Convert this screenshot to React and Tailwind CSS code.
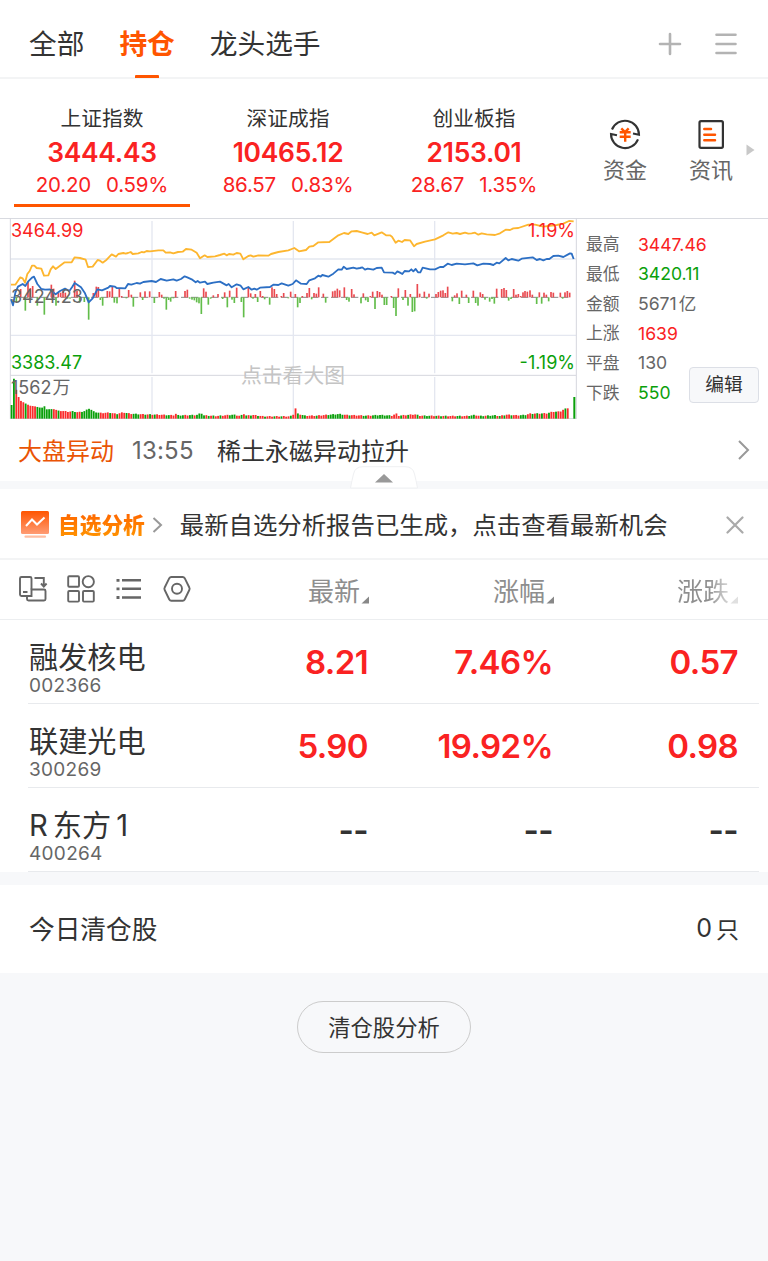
const tabs = ["全部", "持仓", "龙头选手"];

const indices = [
    { name: "上证指数", value: "3444.43", change: "20.20", percent: "0.59%" },
    { name: "深证成指", value: "10465.12", change: "86.57", percent: "0.83%" },
    { name: "创业板指", value: "2153.01", change: "28.67", percent: "1.35%" },
];

const stats = [
    { label: "最高", value: "3447.46", color: "text-[#fa2222]" },
    { label: "最低", value: "3420.11", color: "text-[#0aa00a]" },
    { label: "金额", value: "5671", unit: "亿", color: "text-[#666]" },
    { label: "上涨", value: "1639", color: "text-[#fa2222]" },
    { label: "平盘", value: "130", color: "text-[#666]" },
    { label: "下跌", value: "550", color: "text-[#0aa00a]" },
];

const stocks = [
    { name: "融发核电", code: "002366", cells: ["8.21", "7.46%", "0.57"] },
    { name: "联建光电", code: "300269", cells: ["5.90", "19.92%", "0.98"] },
    { name: "R东方1", code: "400264", cells: ["--", "--", "--"] },
];

// Chart series use a viewBox three times as fine as the drawn size
const leadLine =
    "33,224 46,224 61,202 68,205 75,218 82,192 89,183 96,167 103,167 110,174 124,176 132,197 145,196 152,178 159,169 167,177 194,157 215,157 224,142 240,144 257,149 264,171 278,170 293,150 300,152 308,158 320,149 335,133 348,140 355,132 370,129 377,131 384,129 392,126 398,132 415,130 425,126 432,127 440,123 450,124 475,121 490,121 497,128 510,127 520,130 534,126 548,125 558,117 575,119 590,128 600,145 614,136 622,141 645,139 660,135 673,131 680,136 687,132 700,134 710,129 721,131 730,148 745,138 752,136 760,140 775,136 805,137 813,132 835,126 865,121 883,114 897,124 918,120 928,110 940,108 955,97 988,96 1015,76 1032,69 1045,72 1055,64 1070,63 1085,67 1103,72 1115,68 1123,76 1145,67 1158,76 1170,76 1176,80 1187,98 1195,92 1206,96 1214,90 1230,91 1242,109 1250,102 1275,95 1305,88 1330,76 1345,67 1358,71 1370,69 1380,72 1395,68 1405,71 1415,70 1425,68 1435,74 1445,70 1460,73 1485,75 1500,70 1517,59 1530,60 1540,55 1555,54 1585,44 1605,44 1630,50 1670,45 1690,41 1707,33 1721,34";

const indexLine =
    "33,268 39,286 46,248 54,230 68,222 76,228 84,215 96,203 102,200 112,222 124,237 135,239 150,238 160,247 167,253 180,243 195,236 208,243 216,232 224,219 243,232 255,250 266,277 278,265 292,238 306,241 325,233 330,228 345,230 350,234 376,235 384,222 394,224 410,219 420,221 430,216 455,213 468,216 482,207 500,212 520,208 530,212 543,207 554,199 562,202 575,208 587,217 593,213 600,218 615,215 622,222 640,218 660,215 680,226 686,222 695,232 710,223 722,227 730,238 745,231 755,239 763,236 770,239 780,233 810,231 820,224 835,225 845,220 865,227 878,222 888,211 903,221 920,222 928,211 945,205 955,197 962,200 967,195 985,200 1000,191 1015,178 1025,179 1031,170 1040,177 1060,173 1070,176 1080,174 1087,172 1095,179 1103,176 1120,179 1130,174 1145,173 1152,187 1178,188 1185,192 1192,184 1200,188 1207,192 1214,183 1227,184 1234,178 1240,184 1247,177 1254,187 1261,187 1268,173 1290,178 1305,178 1320,171 1330,171 1343,161 1355,165 1370,161 1395,163 1420,160 1432,166 1450,161 1470,162 1480,165 1490,158 1498,160 1517,144 1525,151 1535,147 1555,152 1565,146 1598,142 1610,150 1620,147 1630,151 1640,147 1648,147 1660,138 1675,137 1690,141 1710,130 1715,131 1721,147";

const momentum = [
    [49, -14], [62, 25], [76, -40], [84, 47], [91, 28], [98, 34], [112, -25], [133, -52], [154, 38], [161, 26], [168, -25],
    [175, 14], [182, 14], [189, 20], [196, 14], [203, -4], [210, -4], [224, 50], [231, 20], [239, -16], [253, -14], [266, -67],
    [280, 13], [289, 32], [295, 31], [301, -8], [308, -25], [322, 19], [329, 18], [337, 32], [343, -16], [351, -18], [358, 25],
    [365, 4], [379, -3], [386, 22], [394, 8], [400, -28], [421, 15], [428, -8], [435, 18], [449, 18], [463, -17], [478, 16],
    [485, 8], [492, -4], [499, -37], [506, -8], [512, -13], [520, -3], [527, 19], [555, 19], [562, 23], [569, -4], [576, -7],
    [583, -9], [590, -15], [597, -18], [604, -50], [611, 27], [618, 17], [625, -22], [632, -4], [640, 6], [654, 10], [668, -5],
    [674, 15], [682, -30], [689, 20], [696, -7], [703, -17], [710, 29], [724, -14], [731, -60], [745, 30], [752, 12], [759, -4],
    [766, 10], [773, -14], [781, 19], [788, 4], [794, -6], [809, -22], [816, 30], [823, 25], [830, 10], [844, 4], [851, 13],
    [865, -3], [872, 17], [886, 10], [893, -30], [900, -17], [907, 4], [921, 13], [928, 28], [935, -6], [942, 13], [949, 11],
    [956, 30], [970, 11], [977, -16], [998, 18], [1005, 20], [1012, 26], [1019, 21], [1033, 30], [1040, -8], [1047, -13],
    [1055, 25], [1062, 9], [1083, -18], [1090, 12], [1097, -9], [1104, -14], [1111, 4], [1118, 17], [1125, -35], [1132, 19],
    [1139, 16], [1146, 8], [1153, -23], [1160, -23], [1174, 4], [1181, -32], [1188, -56], [1195, 27], [1209, -8], [1216, 22],
    [1224, -25], [1231, 10], [1237, -44], [1244, -42], [1252, 40], [1259, 11], [1273, 17], [1280, -4], [1287, 11], [1308, 10],
    [1315, 16], [1322, 20], [1329, 21], [1336, 13], [1343, 32], [1357, -12], [1364, 6], [1371, 12], [1378, -20], [1385, 20],
    [1399, 8], [1406, -17], [1420, 20], [1427, -17], [1434, -25], [1441, 15], [1448, 10], [1455, -7], [1469, -13], [1476, -5],
    [1483, -19], [1490, 26], [1505, 25], [1512, 28], [1519, 22], [1526, -10], [1533, -5], [1541, 25], [1548, 8], [1555, 10],
    [1562, 4], [1569, 15], [1575, 19], [1582, 17], [1590, 21], [1597, 8], [1610, -20], [1618, 15], [1625, -19], [1632, 14],
    [1639, 8], [1646, -12], [1653, 16], [1660, 14], [1681, 14], [1688, -4], [1695, 15], [1702, 19], [1709, 14],
];

const volumeKeys = [
    [35, 41], [41, 125], [48, 90], [55, 67], [62, 54], [76, 46], [90, 39], [105, 37], [125, 32], [133, 38], [140, 28],
    [160, 29], [180, 23], [205, 20], [220, 21], [235, 18], [255, 22], [268, 30], [282, 20], [300, 16], [330, 17], [350, 13],
    [370, 18], [390, 14], [430, 12], [480, 11], [520, 9], [527, 14], [535, 9], [590, 10], [604, 16], [611, 9], [650, 7],
    [700, 11], [722, 7], [731, 14], [740, 8], [760, 10], [790, 6], [870, 6], [879, 9], [886, 32], [893, 14], [915, 8],
    [950, 8], [975, 10], [1018, 13], [1040, 10], [1100, 8], [1140, 10], [1178, 8], [1188, 15], [1196, 8], [1245, 12],
    [1260, 8], [1340, 7], [1400, 7], [1425, 10], [1440, 7], [1485, 9], [1500, 7], [1520, 11], [1550, 9], [1575, 10],
    [1590, 14], [1640, 15], [1660, 20], [1680, 20], [1690, 26], [1702, 31],
];

const volumeColors =
    "GGRRRRGRRRRGGGGGGGRRGRRRRRGGRRGGGGGGGGRRRRGRRGRRRGRRGGGRRGRGRGRRRRGGRRRGGGRRGGRGGGGRGRGRRGRRRGGGRRGRGRGRRGRRGRRRGRRGRRRGRRGR";

function volumeAt(x) {
    const i = volumeKeys.findIndex(([kx]) => kx >= x);
    if (i <= 0) return volumeKeys[i === 0 ? 0 : volumeKeys.length - 1][1];
    const [x0, y0] = volumeKeys[i - 1];
    const [x1, y1] = volumeKeys[i];
    return y0 + ((y1 - y0) * (x - x0)) / (x1 - x0);
}

const volumes = Array.from({ length: 238 }, (_, i) => {
    const x = 35 + i * 7.04;
    return {
        x,
        h: volumeAt(x) + (i > 20 ? (i * 7) % 3 : 0),
        up: x > 1650 ? i % 4 !== 0 : volumeColors[i % volumeColors.length] === "R",
    };
});

function Chart() {
    return (
        <svg className="block" width="577" height="201" viewBox="0 24 1731 603" fill="none">
            <g stroke="#e4e7f0" strokeWidth="4">
                <path d="M31 147H1728M31 376H1728" />
                <path d="M456 33V490M880 33V490M1304 33V490M456 501V626M880 501V626M1304 501V626" />
            </g>
            <path d="M31 24V627M1729 24V627M31 496H1728M31 626H1728" stroke="#d5d7de" strokeWidth="3" />
            <path d="M33 262H1710" stroke="#888" strokeWidth="3" strokeDasharray="22 8" />
            {momentum.map(([x, h]) => (
                <rect key={x} x={x - 2.5} y={h > 0 ? 262 - h : 262} width="5" height={Math.abs(h)} fill={h > 0 ? "#ea4a50" : "#62bd4a"} />
            ))}
            {volumes.map(({ x, h, up }) => (
                <rect key={x} x={x - 3} y={626 - h} width="5.5" height={h} fill={up ? "#fa2c2c" : "#0aa00a"} />
            ))}
            <rect x="1720" y="561" width="6" height="65" fill="#0aa00a" />
            <polyline points={leadLine} stroke="#fdb62f" strokeWidth="5.5" strokeLinejoin="round" />
            <polyline points={indexLine} stroke="#2c6fc4" strokeWidth="5.5" strokeLinejoin="round" />
        </svg>
    );
}

function SortMark({ className }) {
    return (
        <svg className={className} width="8" height="8" viewBox="0 0 8 8">
            <path d="M8 0.5V7.5H0.5Z" fill="currentColor" />
        </svg>
    );
}

function Header() {
    return (
        <header className="flex h-[79px] items-center border-b-2 border-[#f3f4f5] pl-[29px] pr-[31px]">
            <nav className="flex h-full gap-[35px] text-[27.7px]">
                {tabs.map((tab, i) => (
                    <a key={tab} className={`relative flex h-full items-center pt-[13px] ${i === 1 ? "font-bold text-[#ff5500]" : ""}`}>
                        {tab}
                        {i === 1 && <span className="absolute -bottom-px left-1/2 h-[3px] w-6 -translate-x-1/2 rounded-t-[1px] bg-[#ff5500]" />}
                    </a>
                ))}
            </nav>
            <svg className="ml-auto mt-[10px]" width="80" height="24" viewBox="0 0 80 24" fill="none" stroke="#b3b3b3" strokeWidth="2.6" strokeLinecap="round">
                <path d="M3 12H23M13 2V22" />
                <path d="M59.5 2.7H78.5M59.5 12H78.5M59.5 21H78.5" />
            </svg>
        </header>
    );
}

function IndexBar() {
    return (
        <section className="flex h-[139px] pl-[9px]">
            {indices.map((item, i) => (
                <div key={item.name} className="flex w-[186px] flex-col items-center px-[5px] pt-[25px]">
                    <div className="text-[20.7px] leading-[30px]">{item.name}</div>
                    <div className="text-[26.4px] font-semibold leading-[36px] tracking-[-0.25px] text-[#fa2222]">{item.value}</div>
                    <div className="flex gap-[15px] text-[20.5px] leading-[30px] tracking-[-0.2px] text-[#fa2222]">
                        <span>{item.change}</span>
                        <span>{item.percent}</span>
                    </div>
                    {i === 0 && <div className="mt-1 h-[3px] w-[176px] bg-[#ff5500]" />}
                </div>
            ))}
            <div className="ml-[15px] flex w-[86px] flex-col items-center pt-10 text-[22px] leading-[34px] text-[#666]">
                <svg width="32" height="32" viewBox="0 0 32 32" fill="none" stroke="#333" strokeWidth="2.1">
                    <path d="M3 10.5A14 14 0 0 1 30 15.7L24 14.5" />
                    <path d="M29 20.3A14 14 0 0 1 2 15L8 16.3" />
                    <path d="M12.3 9.3L16 13L19.7 9.3M10.7 13.3H21.7M10.7 17.7H21.7M16.2 13V22.7" stroke="#ff5500" strokeWidth="2.4" />
                </svg>
                <span className="mt-[2px]">资金</span>
            </div>
            <div className="flex w-[86px] flex-col items-center pt-10 text-[22px] leading-[34px] text-[#666]">
                <svg width="32" height="32" viewBox="0 0 32 32" fill="none" stroke="#333" strokeWidth="2.2">
                    <rect x="4.5" y="2.2" width="23.4" height="26.6" rx="1.5" />
                    <path d="M9.3 10H16M9.3 15.7H20M9.3 21.3H20" stroke="#ff5500" strokeWidth="2.5" strokeLinecap="round" />
                </svg>
                <span className="mt-[2px]">资讯</span>
            </div>
            <svg className="-ml-2 mt-[65px]" width="9" height="12" viewBox="0 0 9 12">
                <path d="M0.5 0.5L8.5 6L0.5 11.5Z" fill="#c8c8c8" />
            </svg>
        </section>
    );
}

function Market() {
    return (
        <section className="flex h-[201px] border-t border-[#d8dae0]">
            <div className="relative -mt-px w-[577px] text-[18px] leading-6">
                <Chart />
                <span className="absolute left-[11px] top-px text-[#fa2222]">3464.99</span>
                <span className="absolute right-[2px] top-px text-[#fa2222]">1.19%</span>
                <span className="absolute left-[11px] top-[67px] text-[#666]">3424.23</span>
                <span className="absolute left-[11px] top-[133px] text-[#0aa00a]">3383.47</span>
                <span className="absolute right-[2px] top-[133px] text-[#0aa00a]">-1.19%</span>
                <span className="absolute left-[11px] top-[158px] flex gap-px text-[#666]"><span>1562</span>万</span>
                <span className="absolute left-[241px] top-[143px] text-[20.8px] leading-[30px] text-[#c4c4c4]">点击看大图</span>
            </div>
            <div className="relative flex-1 pl-[9px] pt-[11px]">
                {stats.map((s) => (
                    <div key={s.label} className="flex h-[29.7px] items-center text-[16.8px]">
                        <span className="w-[52px] text-[#666]">{s.label}</span>
                        <span className={`flex gap-[2px] text-[17.6px] ${s.color}`}>
                            <span>{s.value}</span>
                            {s.unit}
                        </span>
                    </div>
                ))}
                <button className="absolute right-[9px] top-[148px] h-[36px] w-[70px] rounded border border-[#dcdfe6] bg-[#f7f8fa] pt-px text-[18.7px]">编辑</button>
            </div>
        </section>
    );
}

function News() {
    return (
        <section className="relative flex h-[70px] items-center border-b-8 border-[#f7f8fa] pl-[18px] pr-[18px] text-[24px]">
            <span className="pt-[3px] text-[#ea5404]">大盘异动</span>
            <span className="ml-[18px] w-[67px] pt-px tracking-[0.2px] text-[#666]">13:55</span>
            <span className="ml-[18px] pt-[3px]">稀土永磁异动拉升</span>
            <svg className="ml-auto" width="14" height="22" viewBox="0 0 14 22" fill="none" stroke="#999" strokeWidth="2">
                <path d="M3 2L12 11L3 20" />
            </svg>
            <svg className="absolute left-[350px] top-[47px]" width="68" height="23" viewBox="0 0 68 23">
                <path d="M0.5 22Q2 14 3.5 8Q5 0.7 13 0.7H55Q63 0.7 64.5 8Q66 14 67.5 22Z" fill="#fff" stroke="#eff0f2" />
                <path d="M25 16.5L34 8L43 16.5Z" fill="#999" />
            </svg>
        </section>
    );
}

function AnalysisTip() {
    return (
        <section className="flex h-[71px] items-center border-b-2 border-[#f3f4f5] pl-[21px] pr-6">
            <svg className="mt-[2px]" width="28" height="28" viewBox="0 0 28 28" fill="none">
                <defs>
                    <linearGradient id="panel" x1="0" y1="0" x2="0" y2="1">
                        <stop offset="0" stopColor="#ff5500" />
                        <stop offset="1" stopColor="#ff9c74" />
                    </linearGradient>
                </defs>
                <rect width="28" height="23" rx="1.5" fill="url(#panel)" />
                <path d="M5 15L11 8.5L16 13.5L23.5 6.5" stroke="#fff" strokeWidth="2" />
                <path d="M4.5 25.7H24" stroke="#ffbea2" strokeWidth="2.2" strokeLinecap="round" />
            </svg>
            <span className="ml-[9px] bg-gradient-to-b from-[#ff5500] to-[#ff9a00] bg-clip-text pt-[3px] text-[21.7px] font-black text-transparent">自选分析</span>
            <svg className="ml-[7px] mt-[2px]" width="11" height="18" viewBox="0 0 11 18" fill="none" stroke="#999" strokeWidth="2">
                <path d="M1.5 2L9 9L1.5 16" />
            </svg>
            <span className="ml-[17px] pt-1 text-[24.4px]">最新自选分析报告已生成，点击查看最新机会</span>
            <svg className="ml-auto mt-[2px]" width="18" height="18" viewBox="0 0 18 18" stroke="#aaa" strokeWidth="2.2" strokeLinecap="round">
                <path d="M1.5 1.5L16.5 16.5M16.5 1.5L1.5 16.5" />
            </svg>
        </section>
    );
}

function Toolbar() {
    return (
        <section className="flex h-[60px] items-center border-b border-[#eceef0] pl-[18px] text-[26px] text-[#8e8e8e]">
            <svg width="174" height="32" viewBox="0 0 174 32" fill="none" stroke="#666" strokeWidth="1.9">
                <path d="M9 22H3.5Q2 22 2 20.5V4.5Q2 3 3.5 3H12Q13.5 3 13.5 4.5V15.5M5 18H9.5" />
                <path d="M9 22V25Q9 26.5 10.5 26.5H26Q27.5 26.5 27.5 25V17Q27.5 15.5 26 15.5H13.5V22H9" />
                <path d="M16.5 4H25.8V12M23 9.5L25.8 12.5L28.6 9.5" />
                <rect x="50.2" y="2.2" width="10.8" height="10.6" rx="1" />
                <circle cx="70.3" cy="7.7" r="5.6" />
                <rect x="50.2" y="17" width="10.8" height="10.6" rx="1" />
                <rect x="65" y="17" width="10.8" height="10.6" rx="1" />
                <path d="M104 6.3H123M104 14.8H123M104 23.5H123" strokeWidth="2.5" />
                <path d="M98.5 6.3H101.5M98.5 14.8H101.5M98.5 23.5H101.5" strokeWidth="2.8" />
                <path d="M153.3 3H164.7Q166 3 166.7 4.2L171.3 13.5Q172 14.8 171.3 16L166.7 25.5Q166 26.7 164.7 26.7H153.3Q152 26.7 151.3 25.5L146.7 16Q146 14.8 146.7 13.5L151.3 4.2Q152 3 153.3 3Z" />
                <circle cx="159" cy="14.8" r="5" />
            </svg>
            <div className="flex w-[177px] items-end justify-end pt-1">
                最新
                <SortMark className="mb-[7px] ml-px text-[#888]" />
            </div>
            <div className="flex w-[185px] items-end justify-end pt-1">
                涨幅
                <SortMark className="mb-[7px] ml-px text-[#888]" />
            </div>
            <div className="flex w-[184px] items-end justify-end pt-1">
                <span className="bg-gradient-to-r from-[#8e8e8e] from-60% to-[#d8d8d8] bg-clip-text text-transparent">涨跌</span>
                <SortMark className="mb-[7px] ml-px text-[#e0e0e0]" />
            </div>
        </section>
    );
}

function StockRow({ stock }) {
    // Latin characters get a little air between them and the Chinese ones
    const parts = stock.name.split(/(\w+)/).filter(Boolean);

    return (
        <div className="ml-7 mr-[9px] flex h-[84px] items-center border-b border-[#e8eaed]">
            <div className="w-[155px] pl-px pt-[15px]">
                <div className="flex gap-[5px] text-[29.2px] leading-[34px]">
                    {parts.map((part) => (
                        <span key={part}>{part}</span>
                    ))}
                </div>
                <div className="text-[19px] leading-[22px] tracking-[0.3px] text-[#666]">{stock.code}</div>
            </div>
            {stock.cells.map((cell, i) => (
                <div key={i} className={`w-[185px] pt-[3px] text-right text-[33px] font-semibold tracking-[-0.6px] ${cell === "--" ? "" : "text-[#fa2222]"}`}>
                    {cell}
                </div>
            ))}
        </div>
    );
}

export default function App() {
    return (
        <div className="min-h-screen w-[768px] overflow-hidden bg-[#f7f8fa] font-[Inter,'Noto_Sans_CJK_SC',sans-serif] text-[#333]">
            <div className="bg-white">
                <Header />
                <IndexBar />
                <Market />
                <News />
                <AnalysisTip />
                <Toolbar />
                {stocks.map((stock) => (
                    <StockRow key={stock.code} stock={stock} />
                ))}
            </div>
            <div className="mt-[13px] flex h-[88px] items-center justify-between bg-white pl-[29px] pr-[29px] text-[25.7px]">
                <span className="pt-[3px]">今日清仓股</span>
                <span className="flex items-center gap-1 text-[23px]">
                    <span className="text-[25px]">0</span>
                    <span className="pt-[3px]">只</span>
                </span>
            </div>
            <button className="mx-auto mt-7 block h-[52px] w-[174px] rounded-full border border-[#ccc] pt-[2px] text-[22.3px]">清仓股分析</button>
        </div>
    );
}
